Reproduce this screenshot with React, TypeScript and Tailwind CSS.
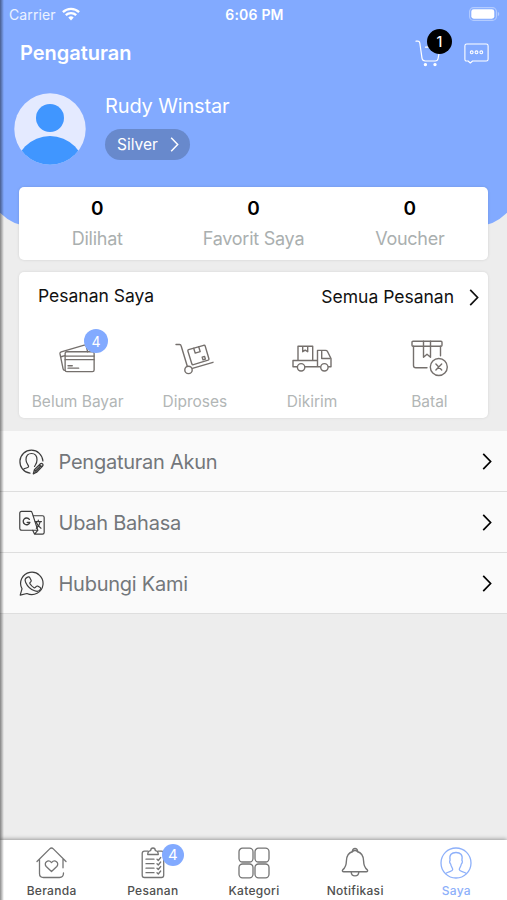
import type { ReactNode } from "react";
import clsx from "clsx";

const iconBase = {
  fill: "none",
  stroke: "currentColor",
  strokeLinecap: "round" as const,
  strokeLinejoin: "round" as const,
};

function Chevron({ className }: { className?: string }) {
  return (
    <svg viewBox="0 0 10 18" className={className} {...iconBase} strokeWidth={1.8} strokeLinecap="butt">
      <path d="M1 1l7.8 8L1 17" strokeLinejoin="miter" />
    </svg>
  );
}

function WifiIcon() {
  return (
    <svg viewBox="0 0 18 14" className="h-[14px] w-[18px]" {...iconBase} strokeWidth={2.3} strokeLinecap="butt">
      <path d="M.9 5.1a11.6 11.6 0 0 1 16.2 0" />
      <path d="M3.8 8.2a7.5 7.5 0 0 1 10.4 0" />
      <path d="M6.3 10.5a4 4 0 0 1 5.4 0L9 13.4z" fill="currentColor" stroke="none" />
    </svg>
  );
}

function BatteryIcon() {
  return (
    <svg viewBox="0 0 31 14" className="h-[14px] w-[31px]">
      <rect x=".6" y=".6" width="26.8" height="12.8" rx="4" fill="none" stroke="#fff" strokeOpacity=".4" strokeWidth="1.1" />
      <rect x="2.3" y="2.3" width="23" height="9.4" rx="2.4" fill="#fff" />
      <path d="M28.8 4.8v4.4q1.5-.7 1.5-2.2t-1.5-2.2z" fill="#fff" fillOpacity=".4" />
    </svg>
  );
}

function CartIcon() {
  return (
    <svg viewBox="0 0 26 27" className="h-[27px] w-[26px]" {...iconBase} strokeWidth={1.2}>
      <path d="M1 1.2h1.8q1.600 0 2 1.800l2.200 15.200q.5 2.800 3.200 2.800h10q2.500 0 2.900-2.500L25 8M10.500 7.200h4" />
      <circle cx="10.4" cy="24.6" r="1.1" fill="currentColor" />
      <circle cx="20" cy="24.6" r="1.1" fill="currentColor" />
    </svg>
  );
}

function ChatIcon() {
  return (
    <svg viewBox="0 0 25 21" className="h-[21px] w-[25px]" {...iconBase} strokeWidth={1.1}>
      <path d="M2.7 1h19.600q1.800 0 1.800 1.800v13.400q0 1.800-1.800 1.800H8.600l-2.300 2-2.200-2H2.700Q.9 18 .9 16.200V2.800Q.9 1 2.700 1z" />
      <circle cx="7.7" cy="9.3" r="1.4" />
      <circle cx="12.5" cy="9.3" r="1.4" />
      <circle cx="17.3" cy="9.3" r="1.4" />
    </svg>
  );
}

function CardsIcon() {
  return (
    <svg viewBox="0 0 38 30" className="h-[29px] w-[37px]" {...iconBase} strokeWidth={1.4}>
      <rect x="6.2" y="8" width="30" height="20.6" rx="1.8" />
      <path d="M6.200 12.500h30M6.200 16.200h30M9.200 22.500h4.400M9.200 25h11" />
      <path d="M5.800 27.300q-1.400-.2-1.700-1.600L.9 10.300q-.3-1.700 1.300-2.200L26 1.200q1.700-.4 2.100 1.200L29.500 8M2 13.200l4-1.200" />
    </svg>
  );
}

function TrolleyIcon() {
  return (
    <svg viewBox="0 0 39 32" className="h-[32px] w-[39px]" {...iconBase} strokeWidth={1.4}>
      <path d="M1 1.500h3.600q1.200 0 1.500 1.200l6.200 20.500M17.400 25.300L38 19.300" />
      <circle cx="13.5" cy="26.9" r="3.7" />
      <path d="M13.600 6.700l15.100-4.400q1.200-.3 1.500.8l3.700 12.600q.3 1.100-.8 1.500l-14.600 4.400q-1.300.4-1.700-.9L12.900 8.100q-.3-1.100.7-1.400z" />
      <path d="M18.700 5.300l1.500 4.800 5-1.500-1.500-4.900M27.200 14.200l2.400-.8.800 2.800-2.400.7z" />
    </svg>
  );
}

function TruckIcon() {
  return (
    <svg viewBox="0 0 40 27" className="h-[27px] w-[40px]" {...iconBase} strokeWidth={1.4}>
      <path d="M6 15V1.200h14.700V15M10.700 1.200v5.500l2.500-1.600 2.500 1.600V1.200" />
      <path d="M5 21.700H1V15.500h24.400M13 21.700h15M36.500 21.700H39v-8.200L35.500 6.500Q34.900 5.400 33.500 5.400h-8v16.300" />
      <path d="M29.700 6.500v7H38" />
      <circle cx="9.1" cy="22.3" r="3.7" />
      <circle cx="32.4" cy="22.3" r="3.7" />
    </svg>
  );
}

function CancelBoxIcon() {
  return (
    <svg viewBox="0 0 37 37" className="h-[37px] w-[37px]" {...iconBase} strokeWidth={1.4}>
      <rect x="1" y="1.2" width="30" height="5" rx="1" />
      <path d="M2.500 6.200v19.300q0 2.300 2.300 2.300h11.200M29.500 6.200v9.600" />
      <path d="M12.500 1.200v16l3.500-3 3.500 3v-16" />
      <circle cx="27.8" cy="27" r="8.5" />
      <path d="M24.900 24.100l5.800 5.800M30.700 24.100l-5.800 5.800" />
    </svg>
  );
}

function AccountIcon() {
  return (
    <svg viewBox="0 0 26 26" className="size-[26px]" {...iconBase} strokeWidth={1.2}>
      <path d="M11 24.100A11.500 11.500 0 1 1 23.900 12" />
      <path d="M4.500 20.200c2.300-1.500 5-1.200 5.100-2.700.1-1.600-2.600-2.800-2.600-6.800 0-4.300 2.300-6.200 5.500-6.200s5.500 1.900 5.500 6.200c0 4-1.600 4.800-2.500 6.800" />
      <path d="M14.300 24.800l1.100-4 6.100-6q1-.9 2.100.1 1 1.100 0 2.100l-6 6.200zM15.400 20.800l2.200 2.400M20.200 16l2.200 2.200M16.600 22l5.300-5.300" strokeWidth={1.3} />
    </svg>
  );
}

function TranslateIcon() {
  return (
    <svg viewBox="0 0 28 26" className="h-[26px] w-[27px]" {...iconBase} strokeWidth={1.2}>
      <path d="M2.700 1h9.500q1 0 1.300 1l6 18.500H3q-2.200 0-2.200-2V3q0-2 1.900-2z" />
      <path d="M14.800 5.500h9.500q1.800 0 1.800 1.800v15.600q0 1.700-1.800 1.700h-8.100l-2-4M16.200 24.600l3.200-4" />
      <path d="M10.700 9.200a3.500 3.500 0 1 0 .5 3.200H8.500" strokeWidth={1.4} />
      <path d="M16.800 11.500h6.500M20 10v1.500M22 11.500c-.7 3.500-2 5.500-4 7M18 12.500c1 2.700 2.700 4.700 4.800 6" />
    </svg>
  );
}

function WhatsappIcon() {
  return (
    <svg viewBox="0 0 26 26" className="size-[26px]" {...iconBase} strokeWidth={1.2}>
      <path d="M1.200 24.100l1.800-6.300A11.200 11.200 0 1 1 7.900 22.500z" />
      <path d="M8.100 6.400l1.400-.5q.8-.2 1.200.6l1.400 2.800q.4.800-.2 1.400l-.9 1q-.4.500 0 1.100c1 1.700 2.300 3 4.100 4q.6.300 1-.1l1.300-1.400q.5-.5 1.200-.2l2.600 1.500q.8.500.4 1.300c-1 2.600-3.200 2.900-6 1.900-4-1.500-7.200-4.600-8.900-8.400-.9-2-.6-4.100 1.400-5z" />
    </svg>
  );
}

function HomeIcon() {
  return (
    <svg viewBox="0 0 31 32" className="h-[32px] w-[31px]" {...iconBase} strokeWidth={1.3}>
      <path d="M1 14.500L13.700 1.900q1.800-1.800 3.600 0L30 14.500M27 11.800v9M3.500 12.500v14q0 4 4 4h16q4 0 4-4.500" />
      <path d="M15.500 24.500l-5.300-5c-3-3.800 2-7.700 5.300-3.900 3.300-3.800 8.300.1 5.300 3.900z" />
    </svg>
  );
}

function OrdersIcon() {
  return (
    <svg viewBox="0 0 24 32" className="h-[32px] w-[24px]" {...iconBase} strokeWidth={1.3}>
      <path d="M7 4.200H3.500Q1.200 4.200 1.200 6.500v21.700q0 2.300 2.300 2.300h16.900q2.300 0 2.300-2.300V6.500q0-2.300-2.300-2.300H17" />
      <path d="M6.700 7.500c0-2.600.9-3.700 3-3.900.1-3.500 4.500-3.500 4.600 0 2.100.2 3 1.300 3 3.900z" />
      <path d="M5 12.200h8M5 16.700h8M5 21.200h8M5 25.700h8M16 12.200l1.300 1.300 2.400-3M16 16.700l1.300 1.300 2.400-3M16 21.200l1.300 1.300 2.400-3M16 25.700l1.300 1.300 2.400-3" />
    </svg>
  );
}

function CategoryIcon() {
  return (
    <svg viewBox="0 0 32 32" className="size-[32px]" {...iconBase} strokeWidth={1.3}>
      <rect x="1" y="1.2" width="14" height="13.8" rx="3.5" />
      <rect x="17" y="1.2" width="14" height="13.8" rx="3.5" />
      <rect x="1" y="17" width="14" height="13.8" rx="3.5" />
      <rect x="17" y="17" width="14" height="13.8" rx="3.5" />
    </svg>
  );
}

function BellIcon() {
  return (
    <svg viewBox="0 0 28 32" className="h-[32px] w-[28px]" {...iconBase} strokeWidth={1.4}>
      <path d="M11.800 4.500c-4.500 1.200-6.300 4.700-6.400 9.500-.1 4.500-.8 6.500-3.700 8.900-.7 1-.2 1.900 1 1.900h22.600c1.200 0 1.700-.9 1-1.900-2.900-2.400-3.600-4.400-3.700-8.900-.1-4.800-1.900-8.300-6.400-9.500" />
      <path d="M11.400 4.600c-.2-4.200 5.400-4.200 5.200 0M12.300 4q1.700-1 3.400 0M10.200 25c.3 5.200 7.300 5.200 7.600 0" />
    </svg>
  );
}

function PersonIcon() {
  return (
    <svg viewBox="0 0 32 32" className="size-[32px]" {...iconBase} strokeWidth={1.3}>
      <circle cx="16" cy="16" r="15" />
      <path d="M5.600 26.500c3.300-2.400 7-1.600 7.100-4 .1-2-1.700-2.400-2-5.500-1-.5-1.500-3-.6-3.600C8.900 7.500 11.800 5.500 16 5.500s7.100 2 5.900 7.900c.9.600.4 3.100-.6 3.600-.3 3.100-2.100 3.500-2 5.500.1 2.400 3.800 1.600 7.100 4" />
    </svg>
  );
}

const stats = [
  { label: "Dilihat", value: 0 },
  { label: "Favorit Saya", value: 0 },
  { label: "Voucher", value: 0 },
];

const orders: { label: string; icon: ReactNode; badge?: number }[] = [
  { label: "Belum Bayar", icon: <CardsIcon />, badge: 4 },
  { label: "Diproses", icon: <TrolleyIcon /> },
  { label: "Dikirim", icon: <TruckIcon /> },
  { label: "Batal", icon: <CancelBoxIcon /> },
];

const menu = [
  { label: "Pengaturan Akun", icon: <AccountIcon /> },
  { label: "Ubah Bahasa", icon: <TranslateIcon /> },
  { label: "Hubungi Kami", icon: <WhatsappIcon /> },
];

const tabs: { label: string; icon: ReactNode; badge?: number; active?: boolean }[] = [
  { label: "Beranda", icon: <HomeIcon /> },
  { label: "Pesanan", icon: <OrdersIcon />, badge: 4 },
  { label: "Kategori", icon: <CategoryIcon /> },
  { label: "Notifikasi", icon: <BellIcon /> },
  { label: "Saya", icon: <PersonIcon />, active: true },
];

function Header() {
  return (
    <header className="-mx-2.5 h-[226px] rounded-b-[40px] bg-[#82aaff] px-2.5 text-white">
      <div className="grid h-7 grid-cols-3 items-center pr-[7px] pl-[9px] text-[14px]">
        <div className="flex items-center gap-1.5 text-white/85">
          <span className="tracking-[0.1px]">Carrier</span>
          <span className="text-white"><WifiIcon /></span>
        </div>
        <span className="text-center font-semibold tracking-[0.2px]">6:06 PM</span>
        <div className="flex justify-end"><BatteryIcon /></div>
      </div>

      <div className="flex h-[50px] items-center justify-between pr-[18px] pl-5">
        <h1 className="text-[20px] font-semibold">Pengaturan</h1>
        <div className="flex items-center gap-[23px]">
          <div className="relative">
            <CartIcon />
            <span className="absolute -top-[11px] left-3 flex size-[25px] items-center justify-center rounded-full bg-black text-[14px] font-medium">
              1
            </span>
          </div>
          <ChatIcon />
        </div>
      </div>

      <div className="flex pt-[15px] pl-3.5">
        <svg viewBox="0 0 72 72" className="size-[72px]">
          <clipPath id="avatar">
            <circle cx="36" cy="36" r="35.7" />
          </clipPath>
          <g clipPath="url(#avatar)">
            <rect width="72" height="72" fill="#e4eaff" />
            <circle cx="36" cy="25" r="14" fill="#4096ff" />
            <circle cx="36" cy="78" r="35" fill="#4096ff" />
          </g>
        </svg>
        <div className="ml-[19px]">
          <div className="text-[20px] leading-[26px] tracking-[-0.15px]">Rudy Winstar</div>
          <div className="mt-[10px] flex h-[31px] w-[85px] items-center justify-between rounded-full bg-[#6889cc] pr-[11px] pl-3 text-[15.5px]">
            Silver
            <Chevron className="h-[15px] w-[9px]" />
          </div>
        </div>
      </div>
    </header>
  );
}

function Stats() {
  return (
    <section className="relative mx-[19px] -mt-[39px] grid h-[73px] grid-cols-3 rounded-[5px] bg-white shadow-[0_0_3px_rgba(0,0,0,0.12)]">
      {stats.map((s) => (
        <div key={s.label} className="flex flex-col items-center pt-[9px]">
          <span className="text-[19px] leading-[25px] font-semibold text-black">{s.value}</span>
          <span className="mt-1.5 text-[18px] leading-6 tracking-[-0.25px] text-[#aaafaf]">{s.label}</span>
        </div>
      ))}
    </section>
  );
}

function Orders() {
  return (
    <section className="mx-[19px] mt-3 h-[146px] rounded-[5px] bg-white shadow-[0_0_3px_rgba(0,0,0,0.1)]">
      <div className="flex h-[50px] items-center justify-between pr-[9px] pl-[19px] text-[17.5px] text-[#111]">
        <span className="-mt-0.5">Pesanan Saya</span>
        <span className="flex items-center gap-[15px]">
          Semua Pesanan
          <Chevron className="h-[17px] w-[10px]" />
        </span>
      </div>
      <div className="grid grid-cols-4">
        {orders.map((o) => (
          <div key={o.label} className="flex flex-col items-center">
            <div className="relative flex h-[73px] items-center text-[#75706d]">
              {o.icon}
              {o.badge && (
                <span className="absolute top-[7px] left-[25px] flex size-6 items-center justify-center rounded-full bg-[#82aaff] text-[14px] text-white">
                  {o.badge}
                </span>
              )}
            </div>
            <span className="-mt-[3px] text-[15.5px] leading-5 text-[#b2b6b6]">{o.label}</span>
          </div>
        ))}
      </div>
    </section>
  );
}

function Menu() {
  return (
    <nav className="mt-[13px]">
      {menu.map((m) => (
        <div
          key={m.label}
          className="flex h-[61px] items-center border-b border-[#dedede] bg-[#fafafa] pt-px pr-[15px] pl-[18.5px] text-[#3c3c3c]"
        >
          <span className="flex w-7 items-center">{m.icon}</span>
          <span className="ml-[12px] flex-1 text-[20px] tracking-[-0.25px] text-[#73777b]">{m.label}</span>
          <Chevron className="h-[17px] w-[10px] text-black" />
        </div>
      ))}
    </nav>
  );
}

function TabBar() {
  return (
    <nav className="grid h-[60px] grid-cols-5 bg-white pl-[1px] shadow-[0_-1px_4px_rgba(0,0,0,0.35)]">
      {tabs.map((t) => (
        <div
          key={t.label}
          className={clsx("flex flex-col items-center pt-[7px]", t.active ? "text-[#8db0fa]" : "text-[#747474]")}
        >
          <div className="relative">
            {t.icon}
            {t.badge && (
              <span className="absolute -top-[3px] left-[21px] flex size-[22px] items-center justify-center rounded-full bg-[#82aaff] text-[15px] text-white">
                {t.badge}
              </span>
            )}
          </div>
          <span
            className={clsx(
              "mt-[3px] text-[12px] leading-[18px] font-medium tracking-[0.3px]",
              !t.active && "text-[#505050]",
            )}
          >
            {t.label}
          </span>
        </div>
      ))}
    </nav>
  );
}

export default function App() {
  return (
    <div className="relative flex h-[900px] w-[507px] flex-col overflow-hidden bg-[#ededed] font-['Inter',sans-serif]">
      <Header />
      <Stats />
      <Orders />
      <Menu />
      <div className="flex-1" />
      <TabBar />
      <div className="pointer-events-none absolute inset-y-0 left-0 w-1 bg-gradient-to-r from-black/45 to-transparent" />
    </div>
  );
}
